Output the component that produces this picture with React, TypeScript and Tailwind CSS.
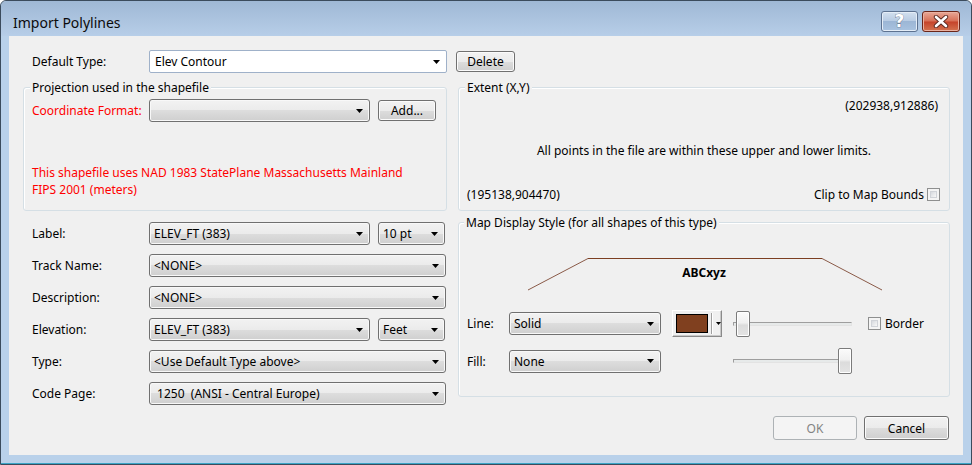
import React from "react";

const BTN_BG =
  "bg-[linear-gradient(#f2f2f2,#ebebeb_50%,#dddddd_50%,#cfcfcf)]";

function Arrow() {
  return (
    <svg width="7" height="4" viewBox="0 0 7 4" className="shrink-0">
      <polygon points="0,0 7,0 3.5,4" fill="#000" />
    </svg>
  );
}

function Combo({ text, className = "" }: { text: string; className?: string }) {
  return (
    <div
      className={`flex items-center h-[23px] rounded-[3px] border border-[#707070] ${BTN_BG} shadow-[inset_0_0_0_1px_#f8f8f8] pl-[4px] pr-[6px] ${className}`}
    >
      <span className="flex-1 whitespace-pre leading-[15px]">{text}</span>
      <Arrow />
    </div>
  );
}

function Btn({
  children,
  className = "",
}: {
  children: React.ReactNode;
  className?: string;
}) {
  return (
    <button
      type="button"
      className={`flex items-center justify-center rounded-[3px] border border-[#707070] ${BTN_BG} shadow-[inset_0_0_0_1px_#fbfbfb] leading-[15px] ${className}`}
    >
      {children}
    </button>
  );
}

function Check() {
  return (
    <div className="w-[13px] h-[13px] border border-[#8e8f8f] bg-[#f4f4f4] p-[2px] shrink-0">
      <div className="w-full h-full border border-[#d0d3d8] bg-[linear-gradient(135deg,#d6d9de,#f8f8f8)]" />
    </div>
  );
}

function Group({
  title,
  titleMl,
  className = "",
  children,
}: {
  title: string;
  titleMl: string;
  className?: string;
  children?: React.ReactNode;
}) {
  return (
    <div
      className={`flex flex-col rounded-[3px] border border-[#d5dfe5] shadow-[inset_1px_1px_0_#ffffff] ${className}`}
    >
      <span
        className={`-mt-[8px] ${titleMl} px-[2px] bg-[#f0f0f0] leading-[15px] w-fit`}
      >
        {title}
      </span>
      {children}
    </div>
  );
}

function Slider({ thumbRight }: { thumbRight?: boolean }) {
  return (
    <div className="relative w-[119px] h-[26px] shrink-0">
      <div className="absolute left-0 right-0 top-[11px] h-[4px] border-t border-l border-[#9e9e9e] border-b border-b-[#e3e3e3] border-r border-r-[#e3e3e3] bg-[#e7eaea]" />
      <div
        className={`absolute top-0 ${
          thumbRight ? "right-0" : "left-[3px]"
        } w-[14px] h-[26px] rounded-[2px] border border-[#7b7b7b] bg-[linear-gradient(#fbfbfb,#f0f0f0_45%,#dcdcdc_55%,#e4e4e4)] shadow-[inset_0_0_0_1px_#ffffff]`}
      />
    </div>
  );
}

export default function App() {
  return (
    <div className="w-[972px] h-[465px] overflow-hidden bg-[#b9d1ea] border border-[#3b4b5c] rounded-t-[6px] flex flex-col font-['Segoe_UI','Noto_Sans',sans-serif] text-[12px] text-black shadow-[inset_0_-1px_0_#3aa5c6]">
      {/* Title bar */}
      <div className="h-[35px] shrink-0 flex items-start bg-[linear-gradient(#9fb8d5,#b7cee8)] rounded-t-[5px]">
        <span className="ml-[12px] mt-[12px] text-[14px] leading-[19px] text-[#0b0b0b]">
          Import Polylines
        </span>
        <div className="ml-auto mr-[11px] mt-[10px] flex gap-[4px]">
          <div className="w-[37px] h-[21px] rounded-[3px] border border-[#5d7290] bg-[linear-gradient(#d3e0ef,#b6cae2_50%,#9cb6d5_50%,#a9c3e0)] shadow-[inset_0_0_0_1px_#e4edf7] flex items-center justify-center">
            <span className="text-white font-bold text-[17px] leading-[17px] font-['DejaVu_Sans',sans-serif] [-webkit-text-stroke:0.6px_#4a586b] [paint-order:stroke_fill]">
              ?
            </span>
          </div>
          <div className="w-[38px] h-[21px] rounded-[3px] border border-[#6b2619] bg-[linear-gradient(#e8a897,#d76f55_48%,#c5432a_52%,#d4734f)] shadow-[inset_0_0_0_1px_#eab2a2] flex items-center justify-center">
            <svg width="16" height="13" viewBox="0 0 16 13">
              <path
                d="M3 2 L13 11 M13 2 L3 11"
                stroke="#5a2a22"
                strokeWidth="4.4"
                strokeLinecap="round"
              />
              <path
                d="M3 2 L13 11 M13 2 L3 11"
                stroke="#ffffff"
                strokeWidth="2.6"
                strokeLinecap="round"
              />
            </svg>
          </div>
        </div>
      </div>

      {/* Client area */}
      <div className="mx-[8px] h-[419px] shrink-0 bg-[#f0f0f0] flex flex-col">
        {/* Default type row */}
        <div className="flex items-center mt-[14px] pl-[23px]">
          <span className="w-[117px] leading-[15px]">Default Type:</span>
          <div className="flex items-center w-[298px] h-[23px] rounded-[2px] border border-[#9fb1c9] bg-white pl-[5px] pr-[6px]">
            <span className="flex-1 leading-[15px]">Elev Contour</span>
            <Arrow />
          </div>
          <Btn className="ml-[9px] w-[59px] h-[21px]">Delete</Btn>
        </div>

        {/* Groups row */}
        <div className="flex mt-[14px]">
          <Group
            title="Projection used in the shapefile"
            titleMl="ml-[6px]"
            className="ml-[14px] w-[424px] h-[124px]"
          >
            <div className="flex items-center mt-[4px] pl-[8px]">
              <span className="w-[117px] text-[#ff0000] leading-[15px]">
                Coordinate Format:
              </span>
              <Combo text="" className="w-[221px]" />
              <Btn className="ml-[8px] w-[58px] h-[21px]">Add...</Btn>
            </div>
            <div className="mt-[42px] pl-[8px] pr-[20px] text-[#ff0000] leading-[17px]">
              This shapefile uses NAD 1983 StatePlane Massachusetts Mainland
              <br />
              FIPS 2001 (meters)
            </div>
          </Group>

          <Group
            title="Extent (X,Y)"
            titleMl="ml-[6px]"
            className="ml-[11px] w-[492px] h-[124px]"
          >
            <div className="mt-[3px] pr-[11px] text-right leading-[15px]">
              (202938,912886)
            </div>
            <div className="mt-[30px] text-center leading-[15px]">
              All points in the file are within these upper and lower limits.
            </div>
            <div className="mt-[29px] flex items-center pl-[8px] pr-[9px] leading-[15px]">
              <span>(195138,904470)</span>
              <span className="ml-auto mr-[3px]">Clip to Map Bounds</span>
              <Check />
            </div>
          </Group>
        </div>

        {/* Lower row */}
        <div className="flex items-start mt-[11px]">
          <div className="ml-[14px] w-[424px] flex flex-col gap-[9px] pl-[9px]">
            <div className="flex items-center">
              <span className="w-[117px] leading-[15px]">Label:</span>
              <Combo text="ELEV_FT (383)" className="w-[221px]" />
              <Combo text="10 pt" className="ml-[8px] w-[67px]" />
            </div>
            <div className="flex items-center">
              <span className="w-[117px] leading-[15px]">Track Name:</span>
              <Combo text="<NONE>" className="w-[297px]" />
            </div>
            <div className="flex items-center">
              <span className="w-[117px] leading-[15px]">Description:</span>
              <Combo text="<NONE>" className="w-[297px]" />
            </div>
            <div className="flex items-center">
              <span className="w-[117px] leading-[15px]">Elevation:</span>
              <Combo text="ELEV_FT (383)" className="w-[221px]" />
              <Combo text="Feet" className="ml-[8px] w-[67px]" />
            </div>
            <div className="flex items-center">
              <span className="w-[117px] leading-[15px]">Type:</span>
              <Combo text="<Use Default Type above>" className="w-[297px]" />
            </div>
            <div className="flex items-center">
              <span className="w-[117px] leading-[15px]">Code Page:</span>
              <Combo
                text=" 1250  (ANSI - Central Europe)"
                className="w-[297px]"
              />
            </div>
          </div>

          <Group
            title="Map Display Style (for all shapes of this type)"
            titleMl="ml-[5px]"
            className="ml-[11px] w-[492px] h-[175px]"
          >
            <div className="relative h-[70px] flex justify-center">
              <svg
                className="absolute inset-0"
                width="490"
                height="70"
                viewBox="0 0 490 70"
              >
                <path
                  d="M69 60 L129 28.5"
                  stroke="#8a5a48"
                  strokeWidth="1"
                  fill="none"
                />
                <path
                  d="M129 28.5 L363 28.5"
                  stroke="#7c3f22"
                  strokeWidth="1"
                  fill="none"
                />
                <path
                  d="M363 28.5 L423 60"
                  stroke="#8a5a48"
                  strokeWidth="1"
                  fill="none"
                />
              </svg>
              <span className="relative pt-[35px] font-bold leading-[15px] h-fit">
                ABCxyz
              </span>
            </div>
            <div className="mt-[10px] flex items-center pl-[8px] h-[27px]">
              <span className="w-[42px] leading-[15px]">Line:</span>
              <Combo text="Solid" className="w-[152px]" />
              <div className="ml-[11px] w-[50px] h-[27px] flex items-center border border-t-[#ffffff] border-l-[#ffffff] border-b-[#8a8a8a] border-r-[#8a8a8a] bg-[#f0f0f0] shadow-[inset_-1px_-1px_0_#c8c8c8] pl-[3px]">
                <div className="w-[32px] h-[19px] border border-black bg-[#80401f]" />
                <div className="ml-[3px] w-[1px] h-[21px] bg-[#a0a0a0] border-r border-white box-content" />
                <svg width="5" height="3" viewBox="0 0 5 3" className="ml-[3px]">
                  <polygon points="0,0 5,0 2.5,3" fill="#000" />
                </svg>
              </div>
              <div className="ml-[11px]">
                <Slider />
              </div>
              <div className="ml-[16px]">
                <Check />
              </div>
              <span className="ml-[4px] leading-[15px]">Border</span>
            </div>
            <div className="mt-[11px] flex items-center pl-[8px] h-[26px]">
              <span className="w-[42px] leading-[15px]">Fill:</span>
              <Combo text="None" className="w-[152px]" />
              <div className="ml-[72px]">
                <Slider thumbRight />
              </div>
            </div>
          </Group>
        </div>

        {/* Bottom buttons */}
        <div className="flex justify-end gap-[7px] pr-[14px] mt-[11px]">
          <button
            type="button"
            className="w-[84px] h-[24px] rounded-[3px] border border-[#adb2b5] bg-[#f4f4f4] text-[#838383] leading-[15px]"
          >
            OK
          </button>
          <Btn className="w-[85px] h-[24px]">Cancel</Btn>
        </div>
      </div>
    </div>
  );
}
